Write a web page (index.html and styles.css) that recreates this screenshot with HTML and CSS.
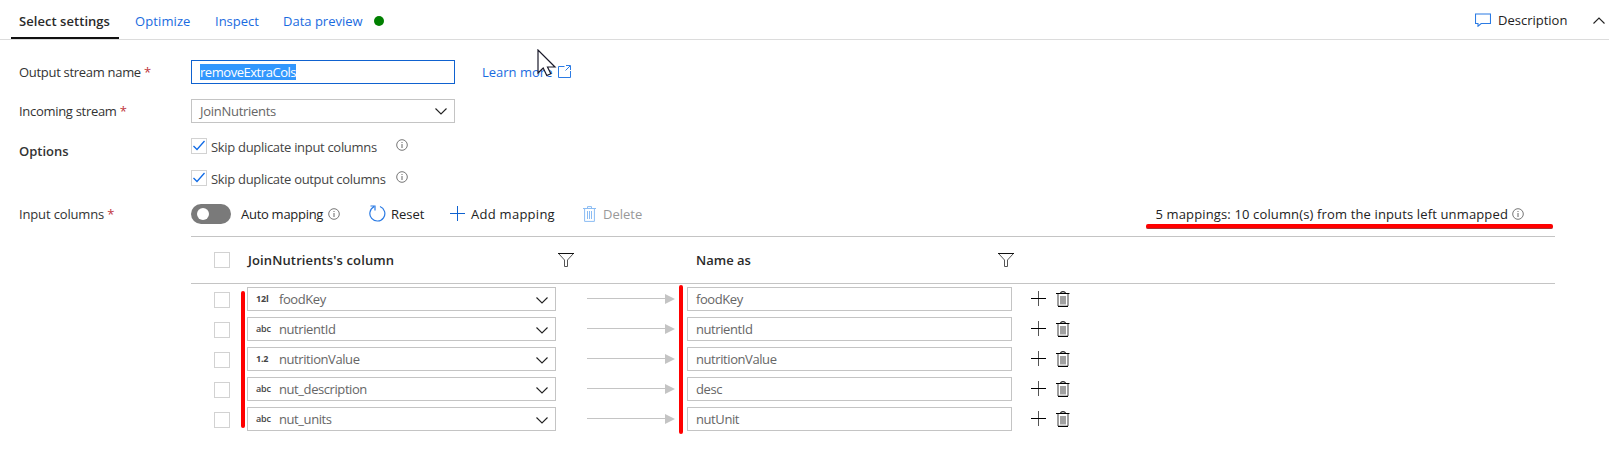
FILE: index.html
```
<!DOCTYPE html>
<html lang="en">
<head>
<meta charset="utf-8">
<title>Select settings</title>
<link rel="stylesheet" href="styles.css">
</head>
<body>
<svg class="defs" width="0" height="0">
  <symbol id="chev" viewBox="0 0 12 7"><path d="M.5.5 6 6 11.5.5" fill="none" stroke="#222" stroke-width="1.1"/></symbol>
  <symbol id="info" viewBox="0 0 12 12"><circle cx="6" cy="6" r="5.3" fill="none" stroke="#666" stroke-width=".9"/><path d="M6 5v4M6 3v1" stroke="#666" stroke-width="1"/></symbol>
  <symbol id="check" viewBox="0 0 16 16"><path d="M2.5 8 6 11.500 13.500 3" fill="none" stroke="#0f6ae6" stroke-width="1.3"/></symbol>
  <symbol id="filter" viewBox="0 0 16 14"><path d="M1 1 6.500 7v6.500h3V7L15 1" fill="none" stroke="#555" stroke-width="1"/><path d="M0 .5h16" stroke="#111"/></symbol>
  <symbol id="plus" viewBox="0 0 15 15"><path d="M7.500 0v15" stroke="#555"/><path d="M0 7.500h15" stroke="#000"/></symbol>
  <symbol id="trash" viewBox="0 0 14 16"><path d="M2 3v12M12 3v12" stroke="#777" stroke-width="1.400"/><path d="M4.500 2Q5 .6 7 .6T9.500 2" fill="none" stroke="#222" stroke-width="1.100"/><path d="M0 2.500h13.500M2 15.400h10" stroke="#000" stroke-width="1.100"/><path d="M4 5h6v8.500H4z" fill="#a0a0a0"/></symbol>
  <symbol id="arrow" viewBox="0 0 88 10"><path d="M0 4.500h79" stroke="#c4c4c4"/><path d="M78 0l10 5-10 5z" fill="#c4c4c4"/></symbol>
</svg>

<header class="tabs">
  <span class="tab active">Select settings</span>
  <span class="tab optimize">Optimize</span>
  <span class="tab inspect">Inspect</span>
  <span class="tab preview">Data preview</span>
  <i class="dot"></i>
  <div class="describe">
    <svg width="16" height="14" viewBox="0 0 16 14"><path d="M.5 1h15v9.500H6.200L3 13.200V10.500H.5z" fill="none" stroke="#2b7be4" stroke-width="1.100"/></svg>
    <span>Description</span>
    <svg class="collapse" width="12" height="7"><path d="M.5 6.500 6 1l5.500 5.500" fill="none" stroke="#222" stroke-width="1.100"/></svg>
  </div>
</header>

<main>
  <div class="row">
    <label class="label">Output stream name <b class="req">*</b></label>
    <div class="box focused"><span class="selected">removeExtraCols</span></div>
    <a class="learn">Learn more</a>
    <svg class="ext" width="13" height="13" viewBox="0 0 13 13"><path d="M6.500 1.500H.5v11h12V6M8 .5h4.500V5M12 1 7.500 5.500" fill="none" stroke="#2b7be4" stroke-width="1"/></svg>
  </div>
  <div class="row">
    <label class="label">Incoming stream <b class="req">*</b></label>
    <div class="box"><span class="value">JoinNutrients</span><svg class="chev"><use href="#chev"/></svg></div>
  </div>
  <div class="row options">
    <label class="label strong">Options</label>
    <div class="checks">
      <div class="option"><span class="cb"><svg width="16" height="16"><use href="#check"/></svg></span><span class="opt-text">Skip duplicate input columns</span><svg class="info"><use href="#info"/></svg></div>
      <div class="option"><span class="cb"><svg width="16" height="16"><use href="#check"/></svg></span><span class="opt-text">Skip duplicate output columns</span><svg class="info"><use href="#info"/></svg></div>
    </div>
  </div>
  <div class="row mapping">
    <label class="label cols">Input columns <b class="req">*</b></label>
    <div class="toolbar">
      <span class="toggle"><i></i></span>
      <span class="auto">Auto mapping</span><svg class="info"><use href="#info"/></svg>
      <svg class="reset-icon" width="17" height="17" viewBox="0 0 17 17"><path d="M11 1.500A7.500 7.500 0 1 1 5 1.800M1.500 1H6V5.500" fill="none" stroke="#2b7be4" stroke-width="1.200"/></svg>
      <span class="reset">Reset</span>
      <svg class="add-icon" width="15" height="15"><path d="M7.500 0v15M0 7.500h15" stroke="#0f62d0" stroke-width="1"/></svg>
      <span class="add">Add mapping</span>
      <svg class="del-icon" width="13" height="16" viewBox="0 0 13 16"><path d="M0 2.500h13M4.500 2V.6h4V2M1.600 3v12.400h9.800V3M4.500 5v8M6.500 5v8M8.500 5v8" fill="none" stroke="#8bbcf3" stroke-width="1"/></svg>
      <span class="delete">Delete</span>
      <span class="status">5 mappings: 10 column(s) from the inputs left unmapped</span><svg class="info"><use href="#info"/></svg>
      <i class="mark mark-status"></i>
    </div>
  </div>

  <section class="table">
    <div class="thead">
      <span class="cb"></span>
      <span class="th join">JoinNutrients's column</span>
      <svg class="filter"><use href="#filter"/></svg>
      <span class="th name">Name as</span>
      <svg class="filter"><use href="#filter"/></svg>
    </div>
    <div class="tbody">
      <div class="trow"><span class="cb"></span><div class="select"><span class="type num">12l</span><span class="value">foodKey</span><svg class="chev"><use href="#chev"/></svg></div><svg class="arrow"><use href="#arrow"/></svg><div class="input">foodKey</div><svg class="plus"><use href="#plus"/></svg><svg class="trash"><use href="#trash"/></svg></div>
      <div class="trow"><span class="cb"></span><div class="select"><span class="type">abc</span><span class="value">nutrientId</span><svg class="chev"><use href="#chev"/></svg></div><svg class="arrow"><use href="#arrow"/></svg><div class="input">nutrientId</div><svg class="plus"><use href="#plus"/></svg><svg class="trash"><use href="#trash"/></svg></div>
      <div class="trow"><span class="cb"></span><div class="select"><span class="type num">1.2</span><span class="value">nutritionValue</span><svg class="chev"><use href="#chev"/></svg></div><svg class="arrow"><use href="#arrow"/></svg><div class="input">nutritionValue</div><svg class="plus"><use href="#plus"/></svg><svg class="trash"><use href="#trash"/></svg></div>
      <div class="trow"><span class="cb"></span><div class="select"><span class="type">abc</span><span class="value">nut_description</span><svg class="chev"><use href="#chev"/></svg></div><svg class="arrow"><use href="#arrow"/></svg><div class="input">desc</div><svg class="plus"><use href="#plus"/></svg><svg class="trash"><use href="#trash"/></svg></div>
      <div class="trow"><span class="cb"></span><div class="select"><span class="type">abc</span><span class="value">nut_units</span><svg class="chev"><use href="#chev"/></svg></div><svg class="arrow"><use href="#arrow"/></svg><div class="input">nutUnit</div><svg class="plus"><use href="#plus"/></svg><svg class="trash"><use href="#trash"/></svg></div>
      <i class="mark mark-source"></i>
      <i class="mark mark-target"></i>
    </div>
  </section>
</main>

<svg class="cursor" width="20" height="29" viewBox="0 0 20 29"><path d="M1 1v23l5.200-5 3.600 7.500 4-1.800L10.500 18H18z" fill="#fff" stroke="#1a1a2a" stroke-width="1.200"/></svg>
</body>
</html>
```
FILE: styles.css
```
* { box-sizing: border-box; }
body {
  margin: 0;
  width: 1609px;
  height: 459px;
  overflow: hidden;
  background: #fff;
  color: #222;
  font: 13px/18px "Open Sans", sans-serif;
  white-space: nowrap;
}
svg { display: block; flex: none; }
.defs { position: absolute; }

/* Tabs */
.tabs {
  display: flex;
  height: 40px;
  padding-left: 11px;
  border-bottom: 1px solid #dcdcdc;
}
.tab { padding-top: 12px; height: 39px; color: #1a6be0; }
.tab.active {
  width: 108px;
  padding-left: 8px;
  border-bottom: 2px solid #111;
  color: #2a2a2a;
  font-weight: 600;
  letter-spacing: 0.05px;
}
.optimize { width: 80px; padding-left: 16px; letter-spacing: 0.1px; }
.inspect { width: 69px; padding-left: 16px; }
.preview { width: 106px; padding-left: 15px; }
.dot { width: 10px; height: 10px; margin-top: 16px; border-radius: 50%; background: #008000; }
.describe { display: flex; align-items: center; height: 40px; margin-left: auto; padding-right: 4px; }
.describe span { margin-left: 7px; width: 95px; }

/* Form rows */
.row { display: flex; align-items: center; height: 39px; padding-left: 19px; }
main { padding-top: 12px; }
.label { width: 172px; flex: none; color: #333; letter-spacing: -0.3px; }
.label.strong { font-weight: 600; letter-spacing: 0; }
.label.cols { letter-spacing: -0.15px; }
.req { font-weight: 400; color: #c0353c; }
.box {
  display: flex;
  align-items: center;
  width: 264px;
  height: 24px;
  padding: 0 7px 0 8px;
  border: 1px solid #c4c4c4;
}
.box.focused { border-color: #0f62d0; }
.selected { height: 16px; line-height: 17px; background: #3297fd; color: #fff; letter-spacing: -0.46px; }
.value { letter-spacing: -0.42px; color: #666; }
.box .value { letter-spacing: -0.28px; }
.chev { width: 12px; height: 7px; margin-left: auto; position: relative; top: 1px; }
.learn { margin-left: 27px; width: 76px; color: #1a6be0; }

.options { height: 67px; align-items: flex-start; padding-top: 8px; }
.options .label { padding-top: 4px; }
.option { display: flex; align-items: flex-start; height: 32px; }
.cb { display: block; width: 16px; height: 16px; border: 1px solid #d2d2d2; flex: none; }
.cb svg { margin: -1px; }
.opt-text { width: 186px; margin: 0 0 0 4px; color: #444; letter-spacing: -0.31px; }
.info { width: 12px; height: 12px; }
.option .info { margin-top: 1px; margin-left: -1px; }

/* Mapping toolbar */
.mapping { margin: -3px 0 3px; }
.toolbar { display: flex; align-items: center; position: relative; width: 1364px; }
.toggle { width: 40px; height: 20px; padding: 4px 6px; border-radius: 10px; background: #7a7a7a; }
.toggle i { display: block; width: 12px; height: 12px; border-radius: 50%; background: #fff; }
.auto { margin-left: 10px; width: 87px; letter-spacing: -0.28px; }
.reset-icon { margin-left: 29px; }
.reset { margin-left: 5px; width: 58px; }
.add-icon { margin-left: 1px; }
.add { margin-left: 6px; width: 112px; letter-spacing: 0.27px; }
.delete { margin-left: 7px; color: #999; }
.status { margin-left: auto; margin-right: 4px; letter-spacing: 0.14px; }
.status + .info { margin-right: 31px; }
.mark { position: absolute; background: #f00; border-radius: 2px; }
.mark-status { left: 955px; top: 20px; width: 407px; height: 5px; border-bottom: 1px solid #a33; }

/* Mapping table */
.table { width: 1364px; margin-left: 191px; }
.thead {
  display: flex;
  align-items: center;
  height: 48px;
  padding-left: 23px;
  border-top: 1px solid #c4c4c4;
  border-bottom: 1px solid #c4c4c4;
}
.th { font-weight: 600; color: #2a2a2a; }
.join { margin-left: 18px; width: 310px; letter-spacing: 0.12px; }
.name { margin-left: 122px; width: 302px; }
.filter { width: 16px; height: 14px; }
.tbody { position: relative; display: grid; gap: 6px; padding-top: 3px; }
.trow { display: flex; align-items: center; height: 24px; padding-left: 23px; }
.select {
  display: flex;
  align-items: center;
  width: 309px;
  height: 24px;
  margin-left: 17px;
  padding: 0 7px 0 8px;
  border: 1px solid #c4c4c4;
}
.trow > .cb { position: relative; top: 1px; }
.type { width: 23px; color: #444; font: 600 9px/14px "Open Sans", sans-serif; letter-spacing: -0.2px; }
.type.num { font-weight: 700; }
.arrow { width: 88px; height: 10px; margin: 0 12px 0 31px; }
.input {
  width: 325px;
  height: 24px;
  padding: 2px 8px;
  border: 1px solid #c4c4c4;
  color: #666;
  letter-spacing: -0.42px;
}
.plus { width: 15px; height: 15px; margin: -1px 0 0 19px; }
.trash { width: 14px; height: 16px; margin-left: 10px; }
.mark-source { left: 50px; top: 7px; width: 4px; height: 137px; }
.mark-target { left: 488px; top: 1px; width: 4px; height: 149px; }

.cursor { position: absolute; left: 537px; top: 49px; }
```
